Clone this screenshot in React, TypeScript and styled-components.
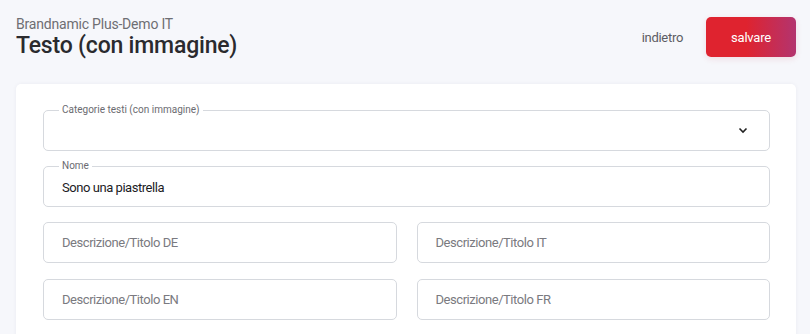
import React from "react";
import styled, { createGlobalStyle } from "styled-components";

const Global = createGlobalStyle`
  html, body { margin: 0; padding: 0; background: #f6f7fb; }
  body { font-family: Roboto, "Liberation Sans", sans-serif; }
  * { box-sizing: border-box; }
`;

const Page = styled.div`
  padding: 13px 14px 0 16px;
  width: 810px;
`;

const Header = styled.header`
  display: flex;
  align-items: flex-start;
  justify-content: space-between;
  height: 71px;
`;

const Titles = styled.div`
  display: flex;
  flex-direction: column;
  padding-top: 2px;
`;

const Subtitle = styled.div`
  font-size: 14px;
  line-height: 18px;
  color: #6e6e73;
  letter-spacing: -0.2px;
`;

const Title = styled.h1`
  margin: 0;
  font-size: 23px;
  line-height: 26px;
  font-weight: 500;
  color: #2a2a2e;
  letter-spacing: -0.2px;
`;

const Actions = styled.div`
  display: flex;
  align-items: center;
  gap: 23px;
  padding-top: 4px;
`;

const LinkButton = styled.button`
  border: 0;
  background: none;
  padding: 0;
  font: inherit;
  font-size: 13px;
  color: #5c5c63;
  letter-spacing: -0.3px;
`;

const PrimaryButton = styled.button`
  width: 90px;
  height: 40px;
  border: 0;
  border-radius: 5px;
  background: linear-gradient(90deg, #df232f 0%, #df232f 45%, #b3346f 100%);
  color: #fff;
  font: inherit;
  font-size: 13px;
  letter-spacing: -0.2px;
  box-shadow: 0 2px 6px rgba(200, 30, 60, 0.12);
`;

const Card = styled.section`
  background: #fff;
  border-radius: 5px;
  box-shadow: 0 0 4px rgba(30, 40, 80, 0.05);
  padding: 26px 26px 40px 27px;
  display: flex;
  flex-direction: column;
  gap: 15px;
`;

const Grid = styled.div`
  display: grid;
  grid-template-columns: 1fr 1fr;
  column-gap: 20px;
  row-gap: 16px;
`;

const Field = styled.div`
  position: relative;
  height: 41px;
  border: 1px solid #d6d9de;
  border-radius: 5px;
  padding: 0 18px;
  display: flex;
  align-items: center;
  min-width: 0;
`;

const Legend = styled.span`
  position: absolute;
  top: -7px;
  left: 15px;
  background: #fff;
  padding: 0 3px;
  font-size: 10px;
  line-height: 12px;
  color: #6b6b70;
  letter-spacing: 0px;
`;

const Value = styled.span<{ $placeholder?: boolean }>`
  flex: 1;
  font-size: 13px;
  color: ${(p) => (p.$placeholder ? "#7a7a80" : "#1c1c1f")};
  letter-spacing: -0.45px;
  padding-top: ${(p) => (p.$placeholder ? "0" : "2px")};
`;

const Chevron = styled.svg`
  width: 10px;
  height: 7px;
  margin-right: 3px;
`;

const Row = styled.div`
  display: flex;
  flex-direction: column;
  gap: 15px;
`;

export default function App() {
  return (
    <>
      <Global />
      <Page>
        <Header>
          <Titles>
            <Subtitle>Brandnamic Plus-Demo IT</Subtitle>
            <Title>Testo (con immagine)</Title>
          </Titles>
          <Actions>
            <LinkButton>indietro</LinkButton>
            <PrimaryButton>salvare</PrimaryButton>
          </Actions>
        </Header>
        <Card>
          <Row>
            <Field>
              <Legend>Categorie testi (con immagine)</Legend>
              <Value />
              <Chevron viewBox="0 0 10 7">
                <path d="M1.5 1.5 L5 5 L8.5 1.5" fill="none" stroke="#222" strokeWidth="1.6" />
              </Chevron>
            </Field>
            <Field>
              <Legend>Nome</Legend>
              <Value>Sono una piastrella</Value>
            </Field>
          </Row>
          <Grid>
            <Field><Value $placeholder>Descrizione/Titolo DE</Value></Field>
            <Field><Value $placeholder>Descrizione/Titolo IT</Value></Field>
            <Field><Value $placeholder>Descrizione/Titolo EN</Value></Field>
            <Field><Value $placeholder>Descrizione/Titolo FR</Value></Field>
          </Grid>
        </Card>
      </Page>
    </>
  );
}
